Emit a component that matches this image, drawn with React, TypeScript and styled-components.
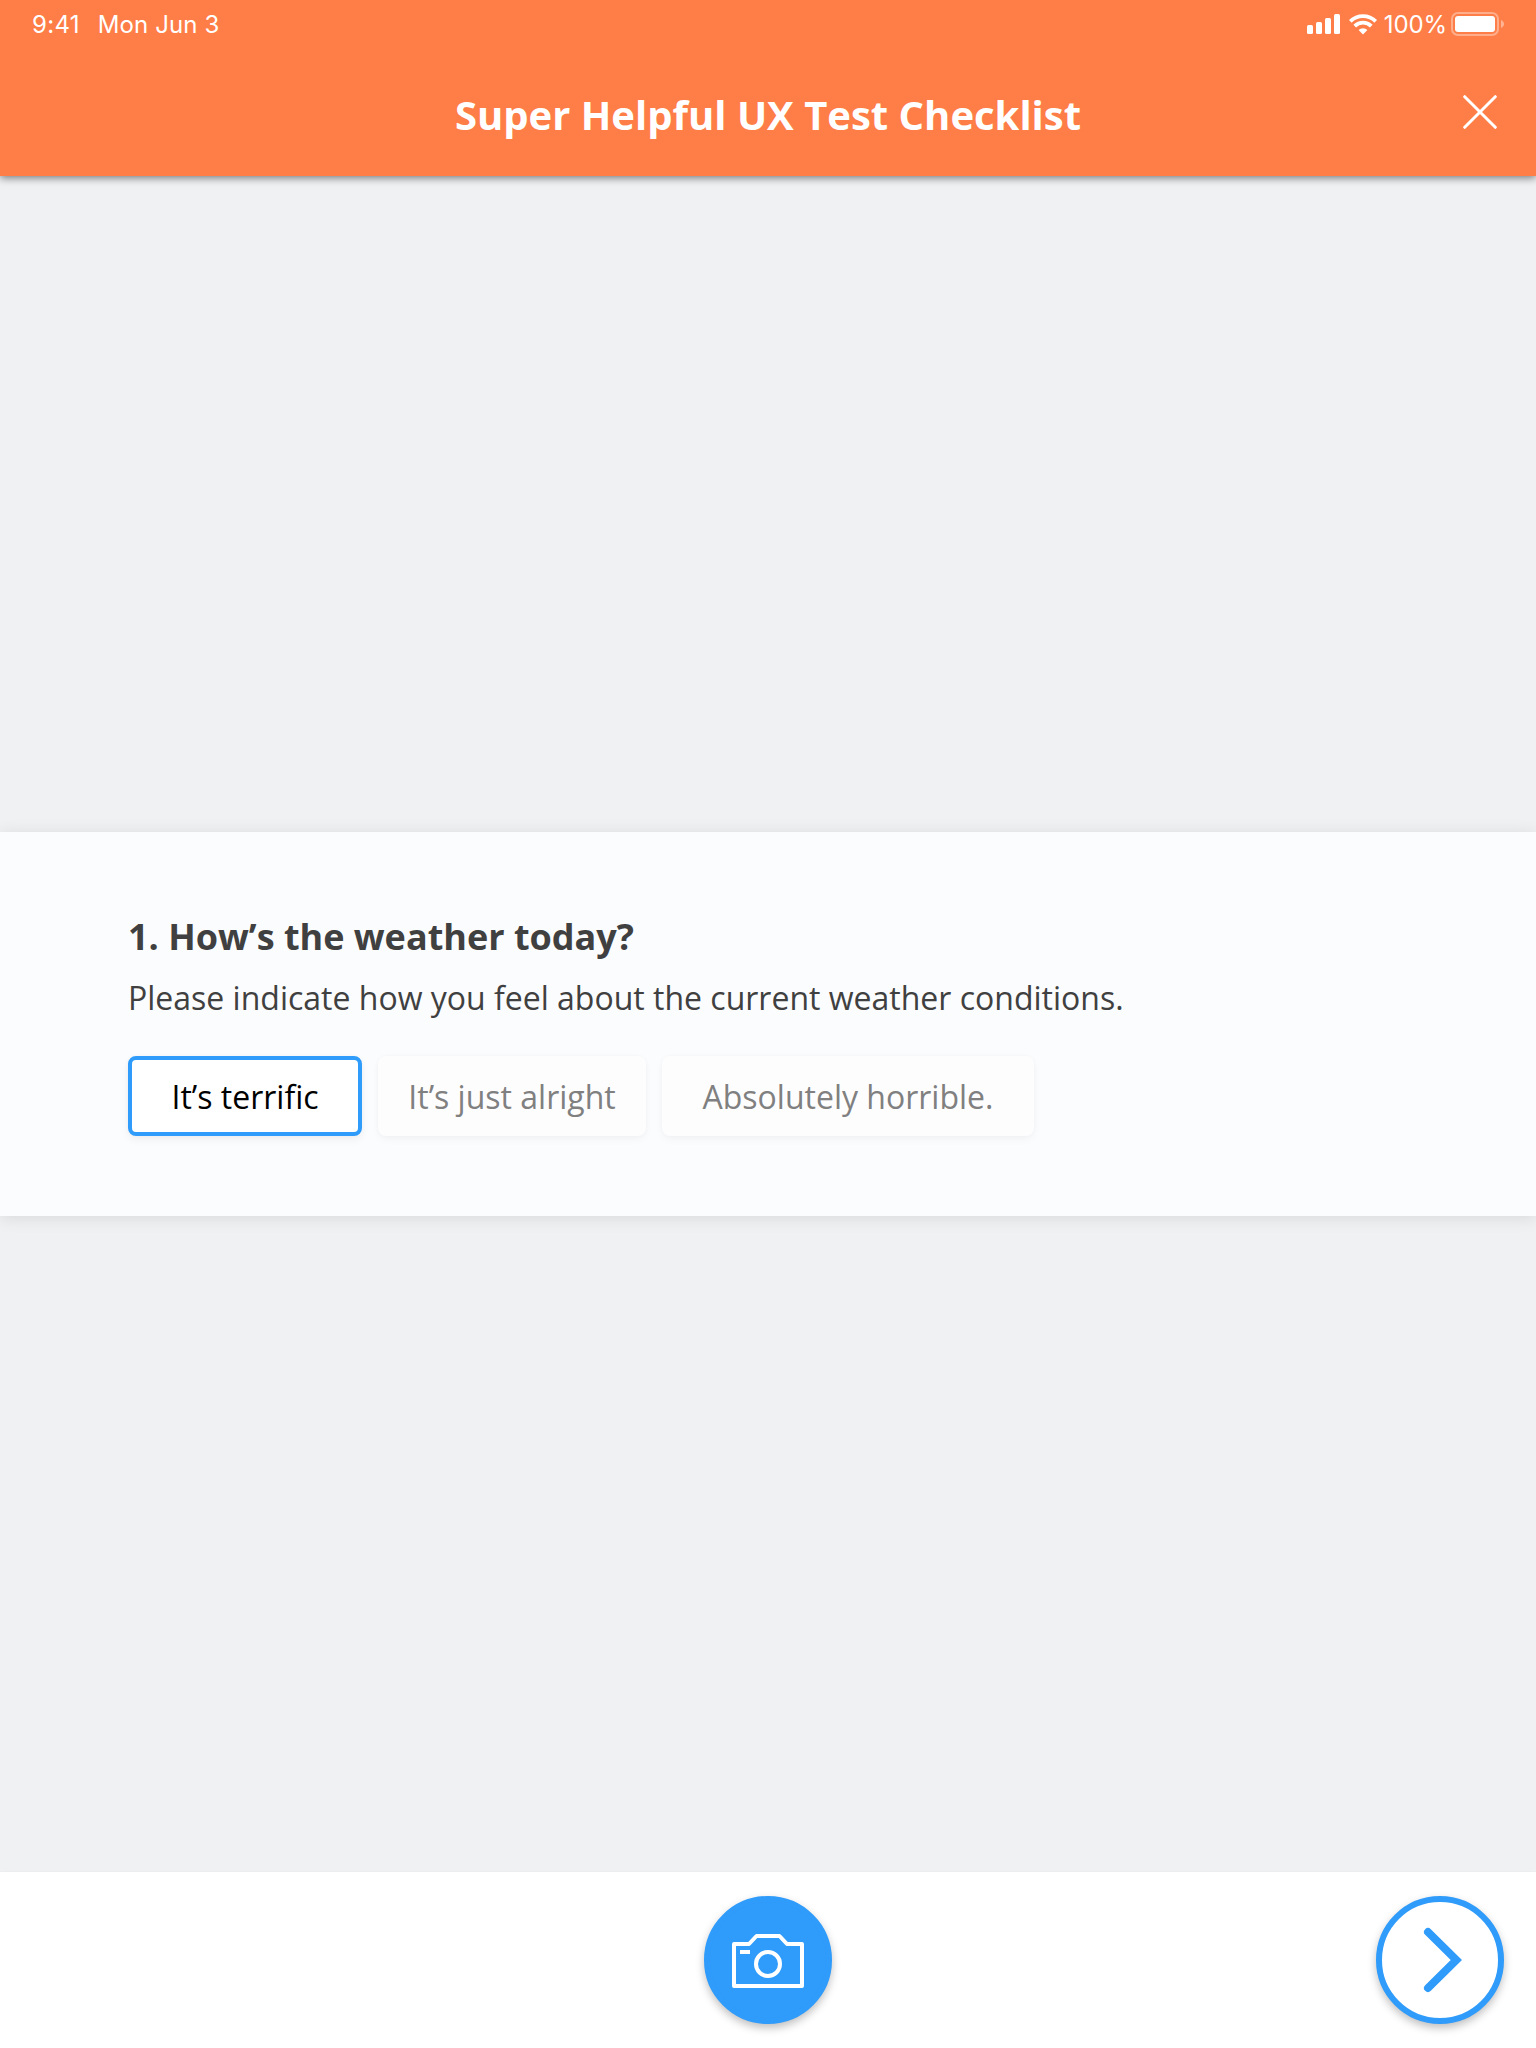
import React, { useState } from "react";
import styled, { createGlobalStyle } from "styled-components";

const GlobalStyle = createGlobalStyle`
  *, *::before, *::after { box-sizing: border-box; }
  body { margin: 0; background: #eff1f3; }
  button { font: inherit; margin: 0; cursor: pointer; }
`;

const Screen = styled.div`
  display: flex;
  flex-direction: column;
  width: 1536px;
  height: 2048px;
  overflow: hidden;
  background: #eff1f3;
  font-family: "Open Sans", "Noto Sans", sans-serif;
`;

const Header = styled.header`
  flex: none;
  height: 176px;
  background: #ff7d46;
  color: #fff;
  box-shadow: 0 2px 8px rgba(0, 0, 0, 0.5);
  z-index: 1;
`;

const StatusBar = styled.div`
  display: flex;
  align-items: center;
  justify-content: space-between;
  height: 48px;
  padding: 0 31px 0 32px;
  font-family: Inter, sans-serif;
  font-size: 24px;
  line-height: 46px;
`;

const StatusGroup = styled.div`
  display: flex;
  align-items: center;
`;

const StatusText = styled.span<{ $spacing: number; $after: number }>`
  margin-right: ${(p) => p.$after}px;
  padding-top: 2px;
  letter-spacing: ${(p) => p.$spacing}px;
  white-space: nowrap;
`;

const SignalGroup = styled.div`
  display: flex;
  align-items: center;
  gap: 8px;
  margin-right: 7px;
`;

const TitleBar = styled.div`
  display: grid;
  grid-template-columns: 72px 1fr 72px;
  align-items: center;
  height: 128px;
  padding: 0 20px;
`;

const Title = styled.h1`
  grid-column: 2;
  margin: 0;
  padding-top: 6px;
  text-align: center;
  font-size: 40px;
  line-height: 56px;
  font-weight: 700;
  white-space: nowrap;
`;

const CloseButton = styled.button`
  display: flex;
  align-items: center;
  justify-content: center;
  justify-self: center;
  width: 64px;
  height: 64px;
  padding: 0;
  border: 0;
  background: transparent;
`;

const Content = styled.main`
  flex: 1;
  display: flex;
  flex-direction: column;
  justify-content: center;
`;

const QuestionCard = styled.section`
  height: 384px;
  padding: 80px 128px;
  background: #fbfcfe;
  box-shadow: 0 2px 16px rgba(0, 0, 0, 0.1);
`;

const Question = styled.h2`
  margin: 0;
  color: #404040;
  font-size: 36px;
  line-height: 50px;
  font-weight: 700;
`;

const Hint = styled.p`
  margin: 12px 0 34px;
  color: #404040;
  font-size: 32px;
  line-height: 48px;
`;

const Options = styled.div`
  display: flex;
  gap: 16px;
`;

const Option = styled.button<{ $selected: boolean; $width: number }>`
  width: ${(p) => p.$width}px;
  height: 80px;
  padding: 1px 0 0;
  border: 4px solid ${(p) => (p.$selected ? "#2f9bfa" : "transparent")};
  border-radius: 8px;
  background: ${(p) => (p.$selected ? "#fff" : "#fdfdfe")};
  color: ${(p) => (p.$selected ? "#000" : "#808080")};
  box-shadow: 0 4px 8px rgba(0, 0, 0, ${(p) => (p.$selected ? 0.05 : 0.03)}),
    0 0 4px rgba(0, 0, 0, 0.03);
  font-size: 32px;
  line-height: 71px;
  white-space: nowrap;
`;

const Footer = styled.footer`
  flex: none;
  display: grid;
  grid-template-columns: 1fr 128px 1fr;
  align-items: center;
  height: 176px;
  padding: 0 32px;
  background: #fff;
  box-shadow: 0 0 2px rgba(0, 0, 0, 0.05);
`;

const RoundButton = styled.button<{ $filled?: boolean }>`
  display: flex;
  align-items: center;
  justify-content: center;
  grid-column: ${(p) => (p.$filled ? 2 : 3)};
  justify-self: end;
  width: 128px;
  height: 128px;
  padding: 0;
  border: 6px solid #2f9bfa;
  border-radius: 50%;
  background: ${(p) => (p.$filled ? "#2f9bfa" : "#fff")};
  box-shadow: 0 4px 8px rgba(0, 0, 0, 0.25);
`;

const SignalIcon = () => (
  <svg width="34" height="20" viewBox="0 0 34 20" fill="#fff">
    <rect x="0" y="11" width="6" height="9" rx="1.5" />
    <rect x="9" y="8" width="6" height="12" rx="1.5" />
    <rect x="18" y="4" width="6" height="16" rx="1.5" />
    <rect x="27" y="0" width="6" height="20" rx="1.5" />
  </svg>
);

const WifiIcon = () => (
  <svg width="28" height="21" viewBox="0 0 28 21" fill="none" stroke="#fff" strokeWidth="3.8">
    <path d="M1.3 7.3a18.1 18.1 0 0 1 25.4 0" />
    <path d="M5.7 12.1a11.8 11.8 0 0 1 16.6 0" />
    <path d="M9.6 16a6.3 6.3 0 0 1 8.8 0L14 20.4z" fill="#fff" stroke="none" />
  </svg>
);

const BatteryIcon = () => (
  <svg width="54" height="24" viewBox="0 0 54 24">
    <rect x="1" y="1" width="46" height="22" rx="6" fill="none" stroke="#fff" strokeOpacity=".38" strokeWidth="2" />
    <rect x="4" y="4" width="40" height="16" rx="3" fill="#fff" />
    <path d="M50 8c4 1.5 4 6.5 0 8z" fill="#fff" fillOpacity=".42" />
  </svg>
);

const CloseIcon = () => (
  <svg width="34" height="34" viewBox="0 0 34 34" stroke="#fff" strokeWidth="3" strokeLinecap="round">
    <path d="M1.7 1.7l30.6 30.6M32.3 1.7L1.7 32.3" />
  </svg>
);

const CameraIcon = () => (
  <svg width="72" height="56" viewBox="0 0 72 56" fill="none" stroke="#fff" strokeWidth="4" strokeLinejoin="round">
    <path d="M2 12H17L24.5 4H47.5L55 12H70V54H2Z" />
    <circle cx="36" cy="32" r="12" />
    <path d="M8 20H18" />
  </svg>
);

const ChevronIcon = () => (
  <svg width="40" height="64" viewBox="0 0 40 64" fill="none" stroke="#2f9bfa" strokeWidth="8" strokeLinecap="round" overflow="visible">
    <path d="M8 4L36.3 32L8 60" />
  </svg>
);

const OPTIONS = [
  { label: "It’s terrific", width: 234 },
  { label: "It’s just alright", width: 268 },
  { label: "Absolutely horrible.", width: 372 },
];

export default function App() {
  const [selected, setSelected] = useState(0);
  return (
    <Screen>
      <GlobalStyle />
      <Header>
        <StatusBar>
          <StatusGroup>
            <StatusText $spacing={0.3} $after={18}>9:41</StatusText>
            <StatusText $spacing={0.1} $after={0}>Mon Jun 3</StatusText>
          </StatusGroup>
          <StatusGroup>
            <SignalGroup>
              <SignalIcon />
              <WifiIcon />
            </SignalGroup>
            <StatusText $spacing={-0.1} $after={4}>100%</StatusText>
            <BatteryIcon />
          </StatusGroup>
        </StatusBar>
        <TitleBar>
          <Title>Super Helpful UX Test Checklist</Title>
          <CloseButton aria-label="Close">
            <CloseIcon />
          </CloseButton>
        </TitleBar>
      </Header>
      <Content>
        <QuestionCard>
          <Question>1. How’s the weather today?</Question>
          <Hint>Please indicate how you feel about the current weather conditions.</Hint>
          <Options>
            {OPTIONS.map((option, i) => (
              <Option
                key={option.label}
                $selected={i === selected}
                $width={option.width}
                onClick={() => setSelected(i)}
              >
                {option.label}
              </Option>
            ))}
          </Options>
        </QuestionCard>
      </Content>
      <Footer>
        <RoundButton $filled aria-label="Take photo">
          <CameraIcon />
        </RoundButton>
        <RoundButton aria-label="Next">
          <ChevronIcon />
        </RoundButton>
      </Footer>
    </Screen>
  );
}
